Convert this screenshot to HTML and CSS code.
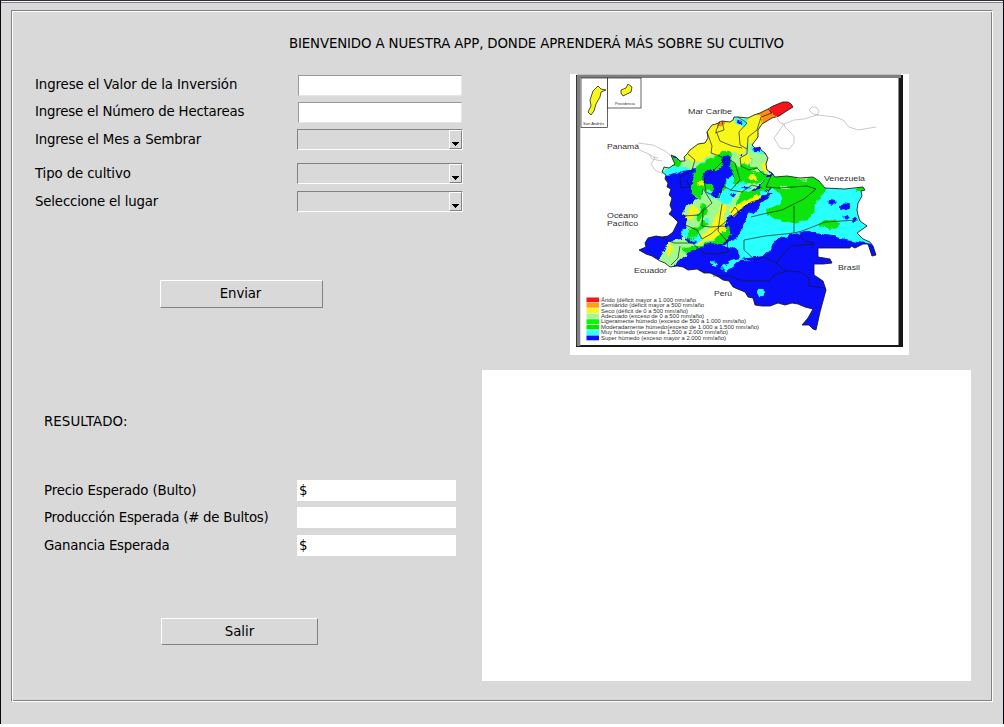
FILE: index.html
```
<!DOCTYPE html>
<html lang="es">
<head>
<meta charset="utf-8">
<title>Cultivos</title>
<link rel="stylesheet" href="styles.css">
</head>
<body>
<main class="window">
<div class="frame">
<h1 class="title">BIENVENIDO A NUESTRA APP, DONDE APRENDERÁ MÁS SOBRE SU CULTIVO</h1>
<div class="columns">
<section class="left">
<form class="inputs">
<label class="row"><span class="t1">Ingrese el Valor de la Inversión</span><i class="entry"></i></label>
<label class="row"><span class="t2">Ingrese el Número de Hectareas</span><i class="entry"></i></label>
<label class="row"><span class="t3">Ingrese el Mes a Sembrar</span><i class="combo"><b class="drop"><svg width="7" height="4" shape-rendering="crispEdges"><path d="M0 0H7V1H6V2H5V3H4V4H3V3H2V2H1V1H0Z"/></svg></b></i></label>
<label class="row crop"><span class="t4">Tipo de cultivo</span><i class="combo"><b class="drop"><svg width="7" height="4" shape-rendering="crispEdges"><path d="M0 0H7V1H6V2H5V3H4V4H3V3H2V2H1V1H0Z"/></svg></b></i></label>
<label class="row"><span class="t5">Seleccione el lugar</span><i class="combo"><b class="drop"><svg width="7" height="4" shape-rendering="crispEdges"><path d="M0 0H7V1H6V2H5V3H4V4H3V3H2V2H1V1H0Z"/></svg></b></i></label>
</form>
<button class="button send">Enviar</button>
<div class="results">
<h2 class="result-title">RESULTADO:</h2>
<div class="row"><span class="t6">Precio Esperado (Bulto)</span><output class="value">$</output></div>
<div class="row"><span class="t7">Producción Esperada (# de Bultos)</span><output class="value"></output></div>
<div class="row last"><span class="t8">Ganancia Esperada</span><output class="value">$</output></div>
</div>
<button class="button exit">Salir</button>
</section>
<section class="right">
<svg class="map" viewBox="570 74 339 281" width="339" height="281">
<defs>
<filter id="rough" filterUnits="userSpaceOnUse" x="630" y="90" width="255" height="250" color-interpolation-filters="sRGB"><feTurbulence type="fractalNoise" baseFrequency=".13" numOctaves="3" seed="4"/><feDisplacementMap in="SourceGraphic" scale="7" xChannelSelector="R" yChannelSelector="G"/><feGaussianBlur stdDeviation=".45"/></filter>
<path id="land" d="M793 107L791 104 788 102 783 102 778 104 773 106 768 109 760 113 754 115 748 118 738 117 734 117 733 120 730 122 722 121 716 124 712 125 709 129 707 132 708 138 705 143 698 144 694 147 690 150 687 154 684 157 685 161 680 161 676 157 671 155 673 160 675 164 669 168 664 167 662 172 666 175 665 179 668 183 667 187 671 189 669 195 672 198 670 205 672 210 669 214 673 217 678 222 676 226 673 232 668 236 662 237 656 236 648 238 645 243 646 247 639 250 646 254 652 256 660 261 665 263 670 267 677 266 683 267 688 270 697 269 704 273 710 273 717 276 723 280 729 281 733 287 740 290 745 292 748 297 753 298 755 305 762 306 770 306 778 303 785 305 792 303 798 304 805 307 813 309 808 318 802 325 809 325 813 329 816 330 820 312 826 290 823 281 814 275 814 264 823 264 832 263 830 259 818 257 818 248 850 248 851 246 855 248 863 244 868 244 872 256 876 255 873 246 870 242 863 239 857 233 867 226 860 221 858 215 857 210 858 203 862 196 861 191 865 190 863 187 845 189 825 188 819 181 813 177 800 178 787 176 775 177 772 173 767 170 766 164 768 158 765 153 761 150 760 147 755 148 752 145 755 141 758 137 758 130 762 124 772 118 779 116 785 112Z"/>
<clipPath id="coast"><use href="#land"/></clipPath>
</defs>
<rect x="570" y="74" width="339" height="281" fill="#fff"/>
<path d="M577 76H902V346H577Z" fill="none" stroke="#171717" stroke-width="2"/>
<path d="M900.5 76V346" stroke="#171717" stroke-width="4"/>
<path d="M578.5 346V76M577 76.3H901" fill="none" stroke="#808080" stroke-width="3.6"/>
<g fill="#fff" stroke="#222" stroke-width=".7"><rect x="581" y="78" width="26.500" height="49.500"/><rect x="607.500" y="78" width="33.500" height="30"/></g>
<g fill="#f7f71a" stroke="#222" stroke-width=".8"><path d="M598 86L601 89 606 90 601 92 600 97 596 104 594 111 591 115 588 112 591 106 590 100 593 91Z"/><path d="M628 84L632 87 631 92 627 94 623 96 621 93 621 90 626 88Z"/></g>
<g clip-path="url(#coast)"><g filter="url(#rough)">
<rect x="630" y="90" width="255" height="250" fill="#0b10fa"/>
<path fill="#ff8b0f" d="M748 108H780V124L756 132 744 120Z"/><path fill="#f7141b" d="M770 96H800V117H773L768 111Z"/>
<path fill="#f7f71a" d="M678 150L704 110 750 113 760 114 764 121 758 135 751 150 735 158 718 156 701 165 684 164Z"/>
<path fill="#ff8b0f" d="M750 112L768 106 774 118 765 123 760 117Z"/>
<path fill="#a1fa8f" d="M665 151L678 159 685 153 688 161 700 162 713 154 725 155 734 150 742 158 747 145 760 142 770 158 769 178 751 189 742 203 728 218 720 242 700 252 684 257 668 270 658 261 668 241 681 239 688 222 680 208 691 196 703 194 709 179 695 176 684 168 660 175Z"/>
<path fill="#28ffff" d="M658 170L672 167 690 167 690 175 683 174 664 176Z"/><path fill="#05e505" d="M667 152L681 161 680 167 671 166Z"/>
<path fill="#0b10fa" d="M666 177L682 171 696 169 697 176 690 182 691 193 698 199 687 205 680 218 666 216 660 200Z"/>
<path fill="#28ffff" d="M699 163L720 154 732 152 731 174 728 188 721 199 710 196 704 186 701 177 710 168 701 168Z"/>
<path fill="#0ce40c" d="M697 166L710 158 722 151 731 151 733 162 742 170 765 173 770 179 751 184 735 184 734 195 724 204 714 192 704 190 700 200 692 193 692 179Z"/>
<path fill="#0b10fa" d="M703 174L711 169 720 169 723 158 731 157 730 167 733 177 723 187 719 198 712 194 711 184 704 183Z"/>
<path fill="#28ffff" d="M734 188L740 182 752 186 745 192 738 191 734 199 725 204 719 201 722 191 727 188 726 179 732 176 732 184ZM737 117L748 119 744 126 736 124 734 120ZM752 144L763 147 764 154 757 154 750 150Z"/>
<path fill="#0b10fa" d="M738 119L743 120 742 124 737 123ZM754 147L760 147 760 152 755 152ZM740 186L750 186 746 189ZM768 174L776 177 773 181 767 178ZM729 193L736 194 733 198Z"/>
<g fill="#f7f71a"><path d="M711 228L718 213 721 205 728 204 724 218 726 229 715 238 702 244 698 246 700 238ZM729 210L739 202 750 194 761 192 764 197 751 204 745 205 734 216ZM684 219L689 208 695 204 698 209 692 221ZM698 181L704 181 704 187 699 186ZM740 157L749 154 748 162 741 164ZM747 174L755 173 757 181 748 181ZM761 164L768 163 767 172 762 169ZM669 241L673 246 669 258 666 252Z"/></g>
<path fill="#ff8b0f" d="M718 123L726 121 725 125 718 128ZM749 158L752 159 751 162ZM758 120L763 120 761 124ZM765 164L768 163V167Z"/>
<g fill="#0ce40c"><path d="M748 166L758 166 757 170 749 170ZM683 232L692 229 703 222 708 223 700 230 693 242 687 242ZM702 203L708 209 706 216 700 222 697 215ZM728 227L739 224 737 231 725 239 717 245 700 251 688 253 680 248 692 246 702 246 714 240ZM741 164L749 163 750 176 742 179 737 173ZM739 197L746 191 765 188 765 193 751 197 735 207Z"/></g>
<path fill="#28ffff" d="M758 191L769 190 779 179 812 177 871 180 885 245 805 233 790 235 770 252 757 260 740 261 725 272 721 266 735 257 733 250 726 250 722 245 739 236 744 223 750 213 758 206 767 197Z"/>
<path fill="#0b10fa" d="M729 224L741 210 756 202 765 195 773 195 760 204 753 213 743 220 743 229 736 234 730 233Z"/>
<path fill="#0ce40c" d="M760 185L775 172 814 172 827 188 820 197 815 206 812 218 794 223 783 222 767 215 769 208 779 203 782 195 771 187 758 192ZM818 222L836 218 840 226 830 230 818 226ZM854 184H866V191L857 191Z"/>
<path fill="#a1fa8f" d="M797 177L809 177 806 182 799 180ZM780 186L787 185 788 189 781 189Z"/>
<path fill="#0b10fa" d="M687 252L709 244 726 246 738 250 739 259 731 264 731 278 706 276 683 265ZM804 231L827 235 865 244 885 250V262L818 260 787 265 739 259 764 256 779 239 790 235Z"/>
<path fill="#28ffff" d="M683 229L689 229 688 239 681 235ZM690 239L699 235 704 240 698 243 690 242ZM711 261L717 262 716 266 711 264ZM705 219L710 219 708 223ZM722 265L731 260 745 257 733 267 723 272Z"/>
<path fill="#0b10fa" d="M686 239L697 240 694 243 686 241Z"/>
<g fill="#0b10fa"><ellipse cx="832" cy="203" rx="4.500" ry="2.700"/><ellipse cx="845" cy="206" rx="5.500" ry="3.500"/><circle cx="847" cy="218" r="2.500"/><circle cx="854" cy="221" r="2"/></g>
<ellipse cx="761.500" cy="293" rx="4.500" ry="3.200" fill="#28ffff"/>
</g></g>
<g fill="none" stroke="#171717" stroke-opacity=".85" stroke-width=".8" stroke-linejoin="round">
<use href="#land" stroke-width="1"/>
<path d="M768 109L772 113 761 117 757 130 748 137 747 154 740 158 741 166M738 117L747 123 739 132 740 145 747 149M720 121L716 131 720 141 732 146 742 148M722 121L724 130 715 133M707 132L712 146 711 153 722 157 727 166M688 154L695 160 692 170 680 177 681 188 690 187 686 179M727 158L735 163 740 180 731 190 723 186 719 198 706 192 704 179 714 170 725 159M741 166L749 170 757 168 763 174 771 176 766 187 779 188 807 186 816 189M771 187L765 198 751 202 739 211 728 220 719 227 711 234 702 239 697 230 683 224M816 189L804 199 782 210 763 214 751 217M794 206V233M794 233L765 236 744 240 744 250 755 260 764 257 776 263 785 252 791 246 814 244M794 233L802 231 815 226 825 222 858 220M798 234L805 241 814 243 812 248M776 263L786 271 801 272 809 278 809 286 825 288M786 271L773 276 769 281 742 281 731 276 713 276M680 246L678 258 671 265M660 237L674 243 692 243 704 253 717 254 728 252 727 241 718 231 720 217 722 204M704 190L712 203 703 211 702 226 711 227 724 226M730 190L742 192 752 185 762 188M684 216L699 215 705 207M731 213L735 207 739 212 734 216"/>
</g>
<g fill="none" stroke="#bdbdbd" stroke-width=".8"><path d="M638 143L653 145 665 151 671 156M639 150L649 154 652 159 662 161M649 154L655 158 651 164 655 170 663 174M653 157L658 158M776 116L780 123 784 124 794 120 804 119 817 115 835 117 843 120 849 127 858 130 876 127M784 124L774 138 780 148 789 149 794 143 794 136 785 127ZM819 115L813 114 809 110 812 107 816 107 819 111 817 115"/></g>
<g class="place"><text x="688" y="114" textLength="44" lengthAdjust="spacingAndGlyphs">Mar Caribe</text><text x="607" y="149" textLength="32" lengthAdjust="spacingAndGlyphs">Panamá</text><text x="824" y="181" textLength="41" lengthAdjust="spacingAndGlyphs">Venezuela</text><text x="607" y="218" textLength="31" lengthAdjust="spacingAndGlyphs">Océano</text><text x="607" y="226" textLength="31" lengthAdjust="spacingAndGlyphs">Pacífico</text><text x="634" y="273" textLength="33" lengthAdjust="spacingAndGlyphs">Ecuador</text><text x="714" y="296" textLength="18" lengthAdjust="spacingAndGlyphs">Perú</text><text x="838" y="270" textLength="22" lengthAdjust="spacingAndGlyphs">Brasil</text></g>
<g class="tiny"><text x="583" y="125" textLength="21" lengthAdjust="spacingAndGlyphs">San Andrés</text><text x="615" y="105" textLength="20" lengthAdjust="spacingAndGlyphs">Providencia</text></g>
<g><rect x="586.500" y="297.500" width="12.500" height="4.800" fill="#f7141b"/><rect x="586.500" y="302.900" width="12.500" height="4.800" fill="#ffa010"/><rect x="586.500" y="308.300" width="12.500" height="4.800" fill="#f7f71a"/><rect x="586.500" y="313.700" width="12.500" height="4.800" fill="#a1fa8f"/><rect x="586.500" y="319.200" width="12.500" height="4.800" fill="#0cf40c"/><rect x="586.500" y="324.700" width="12.500" height="4.800" fill="#05e505"/><rect x="586.500" y="330.200" width="12.500" height="4.800" fill="#28ffff"/><rect x="586.500" y="335.500" width="12.500" height="4.800" fill="#0b10fa"/></g>
<g class="legend"><text x="601" y="301.700" textLength="95" lengthAdjust="spacingAndGlyphs">Árido (déficit mayor a 1.000 mm/año</text><text x="601" y="307.100" textLength="103" lengthAdjust="spacingAndGlyphs">Semiárido (déficit mayor a 500 mm/año</text><text x="601" y="312.500" textLength="87" lengthAdjust="spacingAndGlyphs">Seco (déficit de 0 a 500 mm/año)</text><text x="601" y="318" textLength="103" lengthAdjust="spacingAndGlyphs">Adecuado (exceso de 0 a 500 mm/año)</text><text x="601" y="323.400" textLength="145" lengthAdjust="spacingAndGlyphs">Ligeramente húmedo (exceso de 500 a 1.000 mm/año)</text><text x="601" y="328.900" textLength="158" lengthAdjust="spacingAndGlyphs">Moderadamente húmedo(exceso de 1.000 a 1.500 mm/año)</text><text x="601" y="334.300" textLength="127" lengthAdjust="spacingAndGlyphs">Muy húmedo (exceso de 1.500 a 2.000 mm/año)</text><text x="601" y="339.800" textLength="125" lengthAdjust="spacingAndGlyphs">Super húmedo (exceso mayor a 2.000 mm/año)</text></g>
</svg>
<div class="canvas"></div>
</section>
</div>
</div>
</main>
</body>
</html>
```
FILE: styles.css
```
* { box-sizing: border-box; }
body { margin: 0; background: #fff; font: 13.33px/16px "DejaVu Sans", sans-serif; color: #000; }
.window { height: 724px; background: #d9d9d9; border: 1px solid #08080f; border-bottom: 0; border-top-color: #2b2b3b; padding: 9px 10px 0; box-shadow: inset 0 1px #fff, inset 0 2px #828282; }
.frame { height: 692px; border: 1px solid #828282; border-right-color: #fff; border-bottom-color: #fff; box-shadow: inset 1px 1px #fff, inset -1px -1px #828282; padding: 25px 20px 0 23px; }
.title { margin: 0 0 0 254px; font-size: inherit; font-weight: 400; line-height: 16px; letter-spacing: -.13px; white-space: nowrap; }
.columns { display: flex; margin-top: 22px; }
.left { width: 447px; }
.inputs { display: flex; flex-direction: column; }
.row { display: flex; align-items: center; height: 21px; margin-bottom: 7px; }
.inputs .row:nth-child(-n+2) { height: 22px; margin-bottom: 5px; }
.inputs .row:nth-child(2) { margin-bottom: 6px; }
.row span { width: 262px; white-space: nowrap; line-height: 16px; }
.t1 { letter-spacing: -.11px; }
.t2 { letter-spacing: -.2px; }
.t3, .t5, .t6 { letter-spacing: -.17px; }
.t4 { letter-spacing: -.13px; }
.t7, .t8 { letter-spacing: -.23px; }
.inputs .crop { margin-top: 6px; }
.entry { width: 164px; height: 21px; margin-left: 1px; background: #fff; border: 1px solid #999; border-right-color: #e5e5e5; border-bottom-color: #e5e5e5; }
.combo { width: 166px; height: 21px; border: 1px solid #828282; border-right-color: #fff; border-bottom-color: #fff; display: flex; justify-content: flex-end; }
.drop { width: 13px; height: 19px; border: 1px solid #fff; border-right-color: #828282; border-bottom-color: #828282; display: flex; justify-content: center; padding-top: 11px; }
.drop svg { display: block; }
.button { display: block; font: inherit; color: inherit; padding: 0; background: #d9d9d9; border: 1px solid #fff; border-right-color: #828282; border-bottom-color: #828282; border-radius: 0; }
.send { width: 163px; height: 28px; margin: 61px 0 0 125px; padding-right: 2px; letter-spacing: -.1px; }
.exit { width: 157px; height: 27px; margin: 62px 0 0 126px; }
.results { margin-top: 106px; padding-left: 9px; }
.result-title { margin: 0 0 50px; font-size: inherit; font-weight: 400; line-height: 16px; letter-spacing: .08px; }
.results .row { margin-bottom: 6px; }
.results .row span { width: 253px; }
.results .last { margin: 7px 0 0; }
.value { width: 159px; height: 21px; background: #fff; padding: 3px 2px 2px; }
.right { width: 489px; }
.map { display: block; margin-left: 88px; }
.canvas { height: 311px; margin-top: 15px; background: #fff; }
.place, .legend, .tiny { font-family: "Liberation Sans", sans-serif; fill: #303030; }
.place { font-size: 7.5px; }
.legend { font-size: 5px; }
.tiny { font-size: 3.5px; }
```
